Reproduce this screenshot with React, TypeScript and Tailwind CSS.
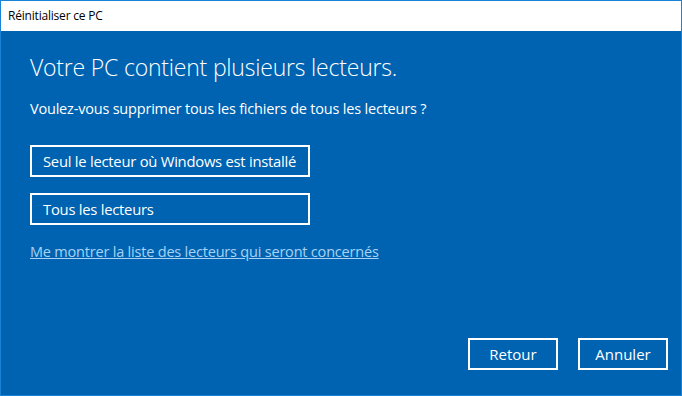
export default function App() {
  const font = { fontFamily: '"Open Sans", "Noto Sans", sans-serif' };
  return (
    <div className="w-[682px] h-[396px] border border-[#1883d7] flex flex-col bg-[#0063b1] overflow-hidden" style={font}>
      <div className="h-[30px] shrink-0 bg-white flex items-center pl-[7px] text-[12px] text-black tracking-[-0.2px]">
        Réinitialiser ce PC
      </div>
      <div className="flex-1 flex flex-col pl-[29px] pr-[13px] text-white">
        <h1 className="mt-[20px] text-[23px] leading-[32px] font-light tracking-[-0.2px]">Votre PC contient plusieurs lecteurs.</h1>
        <p className="mt-[16px] text-[14.5px] leading-[20px] tracking-[-0.2px]">Voulez-vous supprimer tous les fichiers de tous les lecteurs ?</p>
        <button className="mt-[26px] w-[280px] h-[32px] border-2 border-white text-left pl-[11px] text-[14.8px] tracking-[-0.25px]">
          Seul le lecteur où Windows est installé
        </button>
        <button className="mt-[16px] w-[280px] h-[32px] border-2 border-white text-left pl-[11px] text-[14.8px] tracking-[-0.25px]">
          Tous les lecteurs
        </button>
        <a className="mt-[17px] self-start text-[14.5px] leading-[20px] text-[#a6d3f5] underline tracking-[-0.2px]">
          Me montrer la liste des lecteurs qui seront concernés
        </a>
        <div className="mt-auto mb-[25px] flex justify-end gap-[20px]">
          <button className="w-[90px] h-[32px] border-2 border-white text-[15px]">Retour</button>
          <button className="w-[90px] h-[32px] border-2 border-white text-[15px]">Annuler</button>
        </div>
      </div>
    </div>
  );
}
